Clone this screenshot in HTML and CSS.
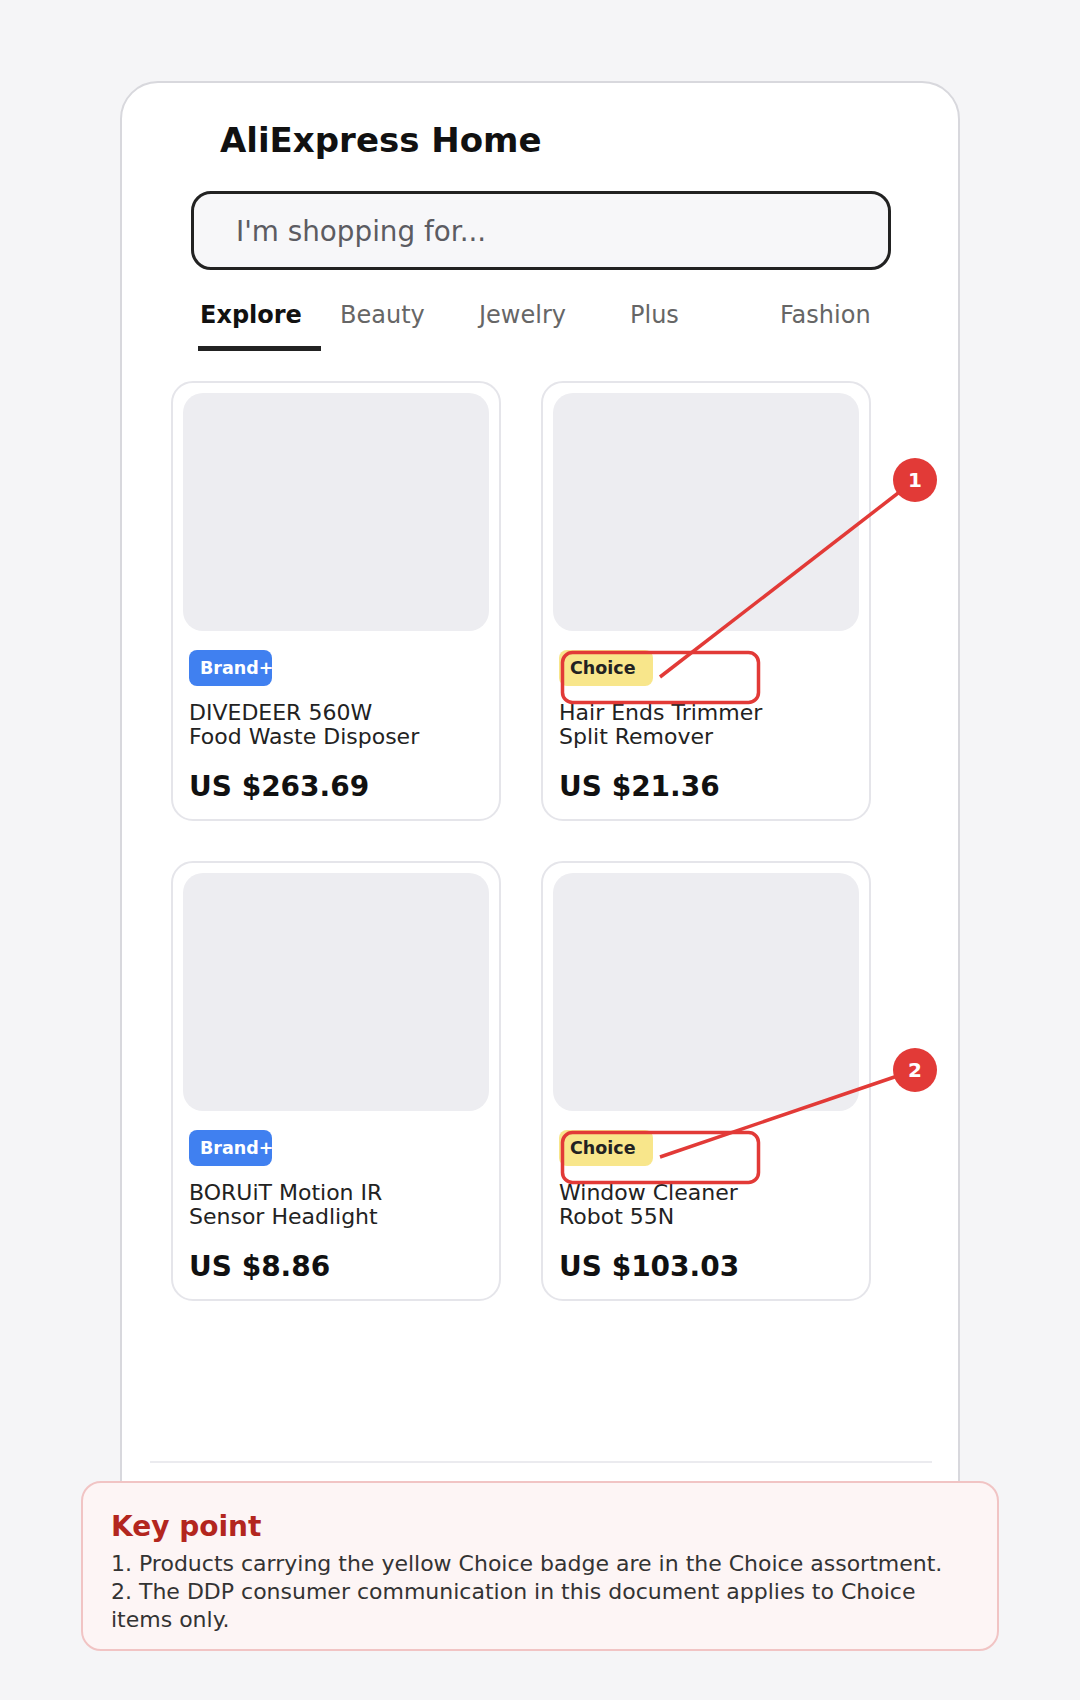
FILE: index.html
```html
<!DOCTYPE html>
<html lang="en">
<head>
<meta charset="utf-8">
<title>AliExpress Home</title>
<link rel="stylesheet" href="styles.css">
</head>
<body>
<div class="page">
  <div class="phone">
    <h1 class="app-title">AliExpress Home</h1>
    <div class="search"><span class="placeholder">I'm shopping for...</span></div>
    <nav class="tabs">
      <span class="tab active">Explore</span>
      <span class="tab">Beauty</span>
      <span class="tab">Jewelry</span>
      <span class="tab">Plus</span>
      <span class="tab">Fashion</span>
    </nav>
    <div class="grid">
      <div class="card">
        <div class="thumb"></div>
        <div class="info">
          <span class="badge brand">Brand+</span>
          <p class="name">DIVEDEER 560W<br>Food Waste Disposer</p>
          <p class="price">US $263.69</p>
        </div>
      </div>
      <div class="card">
        <div class="thumb"></div>
        <div class="info">
          <span class="badge choice">Choice</span>
          <p class="name">Hair Ends Trimmer<br>Split Remover</p>
          <p class="price">US $21.36</p>
        </div>
      </div>
      <div class="card">
        <div class="thumb"></div>
        <div class="info">
          <span class="badge brand">Brand+</span>
          <p class="name">BORUiT Motion IR<br>Sensor Headlight</p>
          <p class="price">US $8.86</p>
        </div>
      </div>
      <div class="card">
        <div class="thumb"></div>
        <div class="info">
          <span class="badge choice">Choice</span>
          <p class="name">Window Cleaner<br>Robot 55N</p>
          <p class="price">US $103.03</p>
        </div>
      </div>
    </div>
    <div class="divider"></div>
  </div>

  <div class="keypoint">
    <h2 class="kp-title">Key point</h2>
    <div class="kp-body">
      <div>1. Products carrying the yellow Choice badge are in the Choice assortment.</div>
      <div>2. The DDP consumer communication in this document applies to Choice items only.</div>
    </div>
  </div>

  <svg class="annotations" width="1080" height="1700" viewBox="0 0 1080 1700" aria-hidden="true">
    <rect x="562.5" y="652.5" width="196" height="50" rx="10" fill="none" stroke="#e23a37" stroke-width="3.5"/>
    <rect x="562.5" y="1132.5" width="196" height="50" rx="10" fill="none" stroke="#e23a37" stroke-width="3.5"/>
    <line x1="915" y1="480" x2="660" y2="677" stroke="#e23a37" stroke-width="3.5"/>
    <line x1="915" y1="1070" x2="660" y2="1157" stroke="#e23a37" stroke-width="3.5"/>
    <circle cx="915" cy="480" r="22" fill="#e23a37"/>
    <circle cx="915" cy="1070" r="22" fill="#e23a37"/>
    <text x="915" y="487" text-anchor="middle" class="num">1</text>
    <text x="915" y="1077" text-anchor="middle" class="num">2</text>
  </svg>
</div>
</body>
</html>
```

FILE: styles.css
```css
html, body {
  margin: 0;
  padding: 0;
  background: #f5f5f7;
}

body {
  font-family: "DejaVu Sans", "Liberation Sans", sans-serif;
  color: #222;
}

.page {
  position: relative;
  width: 1080px;
  min-height: 1700px;
  padding-top: 81px;
  box-sizing: border-box;
}

.phone {
  width: 840px;
  height: 1479px;
  margin: 0 auto;
  box-sizing: border-box;
  background: #ffffff;
  border: 2px solid #d8d8dd;
  border-radius: 38px;
  padding-top: 37px;
}

.app-title {
  margin: 0 0 0 98px;
  font-size: 34px;
  line-height: 40px;
  font-weight: 700;
  color: #111;
}

.search {
  margin: 31px 0 0 69px;
  width: 700px;
  height: 79px;
  box-sizing: border-box;
  border: 3px solid #222;
  border-radius: 20px;
  background: #f7f7f9;
  display: flex;
  align-items: center;
  padding: 2px 0 0 42px;
}

.placeholder {
  font-size: 27.8px;
  color: #5c5c62;
}

.tabs {
  margin: 31px 0 0 78px;
  display: grid;
  grid-template-columns: 140px 139px 151px 150px auto;
}

.tab {
  position: relative;
  font-size: 24px;
  line-height: 28px;
  padding-bottom: 22px;
  color: #666;
}

.tab.active {
  font-weight: 700;
  color: #111;
}

.tab.active::after {
  content: "";
  position: absolute;
  left: -2px;
  bottom: 0;
  width: 123px;
  height: 5px;
  background: #222;
}

.grid {
  margin: 30px 0 0 49px;
  display: grid;
  grid-template-columns: 330px 330px;
  column-gap: 40px;
  row-gap: 40px;
}

.card {
  height: 440px;
  box-sizing: border-box;
  border: 2px solid #e5e5ea;
  border-radius: 22px;
  padding: 10px;
  background: #fff;
}

.thumb {
  height: 238px;
  background: #ededf1;
  border-radius: 20px;
}

.info {
  padding: 0 6px;
  display: flex;
  flex-direction: column;
  align-items: flex-start;
}

.badge {
  margin-top: 19px;
  height: 36px;
  line-height: 36px;
  font-size: 17.5px;
  font-weight: 700;
  border-radius: 8px;
  white-space: nowrap;
  overflow: hidden;
  box-sizing: border-box;
}

.badge.brand {
  width: 83px;
  padding-left: 11px;
  background: #4080f0;
  color: #fff;
}

.badge.choice {
  padding: 0 17px 0 11px;
  background: #f8e68b;
  color: #222;
}

.name {
  margin: 15px 0 0;
  font-size: 22px;
  line-height: 24px;
  color: #222;
}

.price {
  margin: 22px 0 0;
  font-size: 28px;
  line-height: 31px;
  font-weight: 700;
  color: #111;
}

.divider {
  margin: 160px 26px 0 28px;
  height: 2px;
  background: #ebebef;
}

.keypoint {
  position: relative;
  width: 918px;
  margin: -79px auto 0;
  box-sizing: border-box;
  border: 2px solid #f1c4c4;
  border-radius: 20px;
  background: #fdf5f5;
  padding: 28px 41px 15px 28px;
}

.kp-title {
  margin: 0;
  font-size: 28px;
  line-height: 31px;
  font-weight: 700;
  color: #b3261e;
}

.kp-body {
  margin-top: 8px;
  font-size: 22px;
  line-height: 28px;
  color: #333;
}

.annotations {
  position: absolute;
  top: 0;
  left: 0;
  pointer-events: none;
}

.num {
  font-family: "DejaVu Sans", sans-serif;
  font-size: 20px;
  font-weight: 700;
  fill: #fff;
}
```
